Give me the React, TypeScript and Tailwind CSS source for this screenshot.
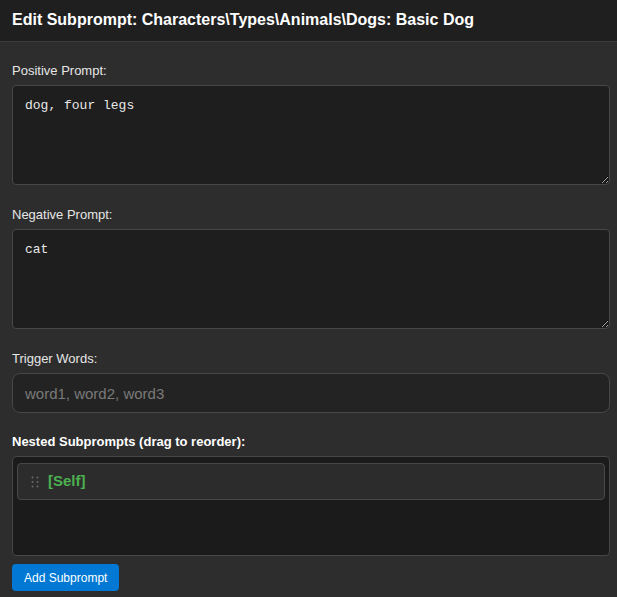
import { useState } from 'react'

function DragDots() {
  return (
    <svg width="8" height="12" viewBox="0 0 8 12" className="shrink-0">
      {[1.5, 6.5].map((x) =>
        [1.5, 6, 10.5].map((y) => <circle key={`${x}-${y}`} cx={x} cy={y} r="1" fill="#6b6b6b" />)
      )}
    </svg>
  )
}

function Label({ children, bold }: { children: React.ReactNode; bold?: boolean }) {
  return (
    <label className={`block text-[13px] leading-[16px] text-[#e6e6e6] mb-[6px] ${bold ? 'font-bold text-white' : ''}`}>
      {children}
    </label>
  )
}

export default function App() {
  const [positive, setPositive] = useState('dog, four legs')
  const [negative, setNegative] = useState('cat')
  const [triggers, setTriggers] = useState('')

  return (
    <div
      className="w-[617px] h-[597px] overflow-hidden bg-[#2d2d2d] text-white"
      style={{ fontFamily: '"Liberation Sans", Arial, sans-serif' }}
    >
      <div className="h-[42px] bg-[#1f1f1f] border-b border-[#3c3c3c] px-3 flex items-center">
        <h1 className="text-[16px] font-bold leading-none text-white -mt-[2px]">
          Edit Subprompt: Characters\Types\Animals\Dogs: Basic Dog
        </h1>
      </div>

      <div className="pl-3 pr-[7px] pt-[21px]">
        <div className="mb-[22px]">
          <Label>Positive Prompt:</Label>
          <textarea
            value={positive}
            onChange={(e) => setPositive(e.target.value)}
            className="block w-full h-[100px] resize-y rounded-[4px] border border-[#474747] bg-[#1e1e1e] px-3 py-[12px] text-[13px] leading-[16px] text-[#e8e8e8] outline-none"
            style={{ fontFamily: '"Liberation Mono", "Courier New", monospace' }}
          />
        </div>

        <div className="mb-[22px]">
          <Label>Negative Prompt:</Label>
          <textarea
            value={negative}
            onChange={(e) => setNegative(e.target.value)}
            className="block w-full h-[100px] resize-y rounded-[4px] border border-[#474747] bg-[#1e1e1e] px-3 py-[12px] text-[13px] leading-[16px] text-[#e8e8e8] outline-none"
            style={{ fontFamily: '"Liberation Mono", "Courier New", monospace' }}
          />
        </div>

        <div className="mb-[21px]">
          <Label>Trigger Words:</Label>
          <input
            value={triggers}
            onChange={(e) => setTriggers(e.target.value)}
            placeholder="word1, word2, word3"
            className="block w-full h-[40px] rounded-[8px] border border-[#474747] bg-[#232323] px-3 text-[15px] text-[#e8e8e8] placeholder:text-[#7a7a7a] outline-none"
          />
        </div>

        <div>
          <Label bold>Nested Subprompts (drag to reorder):</Label>
          <div className="h-[100px] rounded-[4px] border border-[#474747] bg-[#1b1b1b] px-[4px] pt-[6px]">
            <div className="h-[37px] flex items-center gap-[9px] rounded-[4px] border border-[#484848] bg-[#2c2c2c] pl-[13px] cursor-move">
              <DragDots />
              <span className="text-[15px] font-bold text-[#4caf50]">[Self]</span>
            </div>
          </div>
          <button className="mt-[8px] h-[27px] px-3 rounded-[4px] bg-[#0078d4] text-[12px] text-white">
            Add Subprompt
          </button>
        </div>
      </div>
    </div>
  )
}
